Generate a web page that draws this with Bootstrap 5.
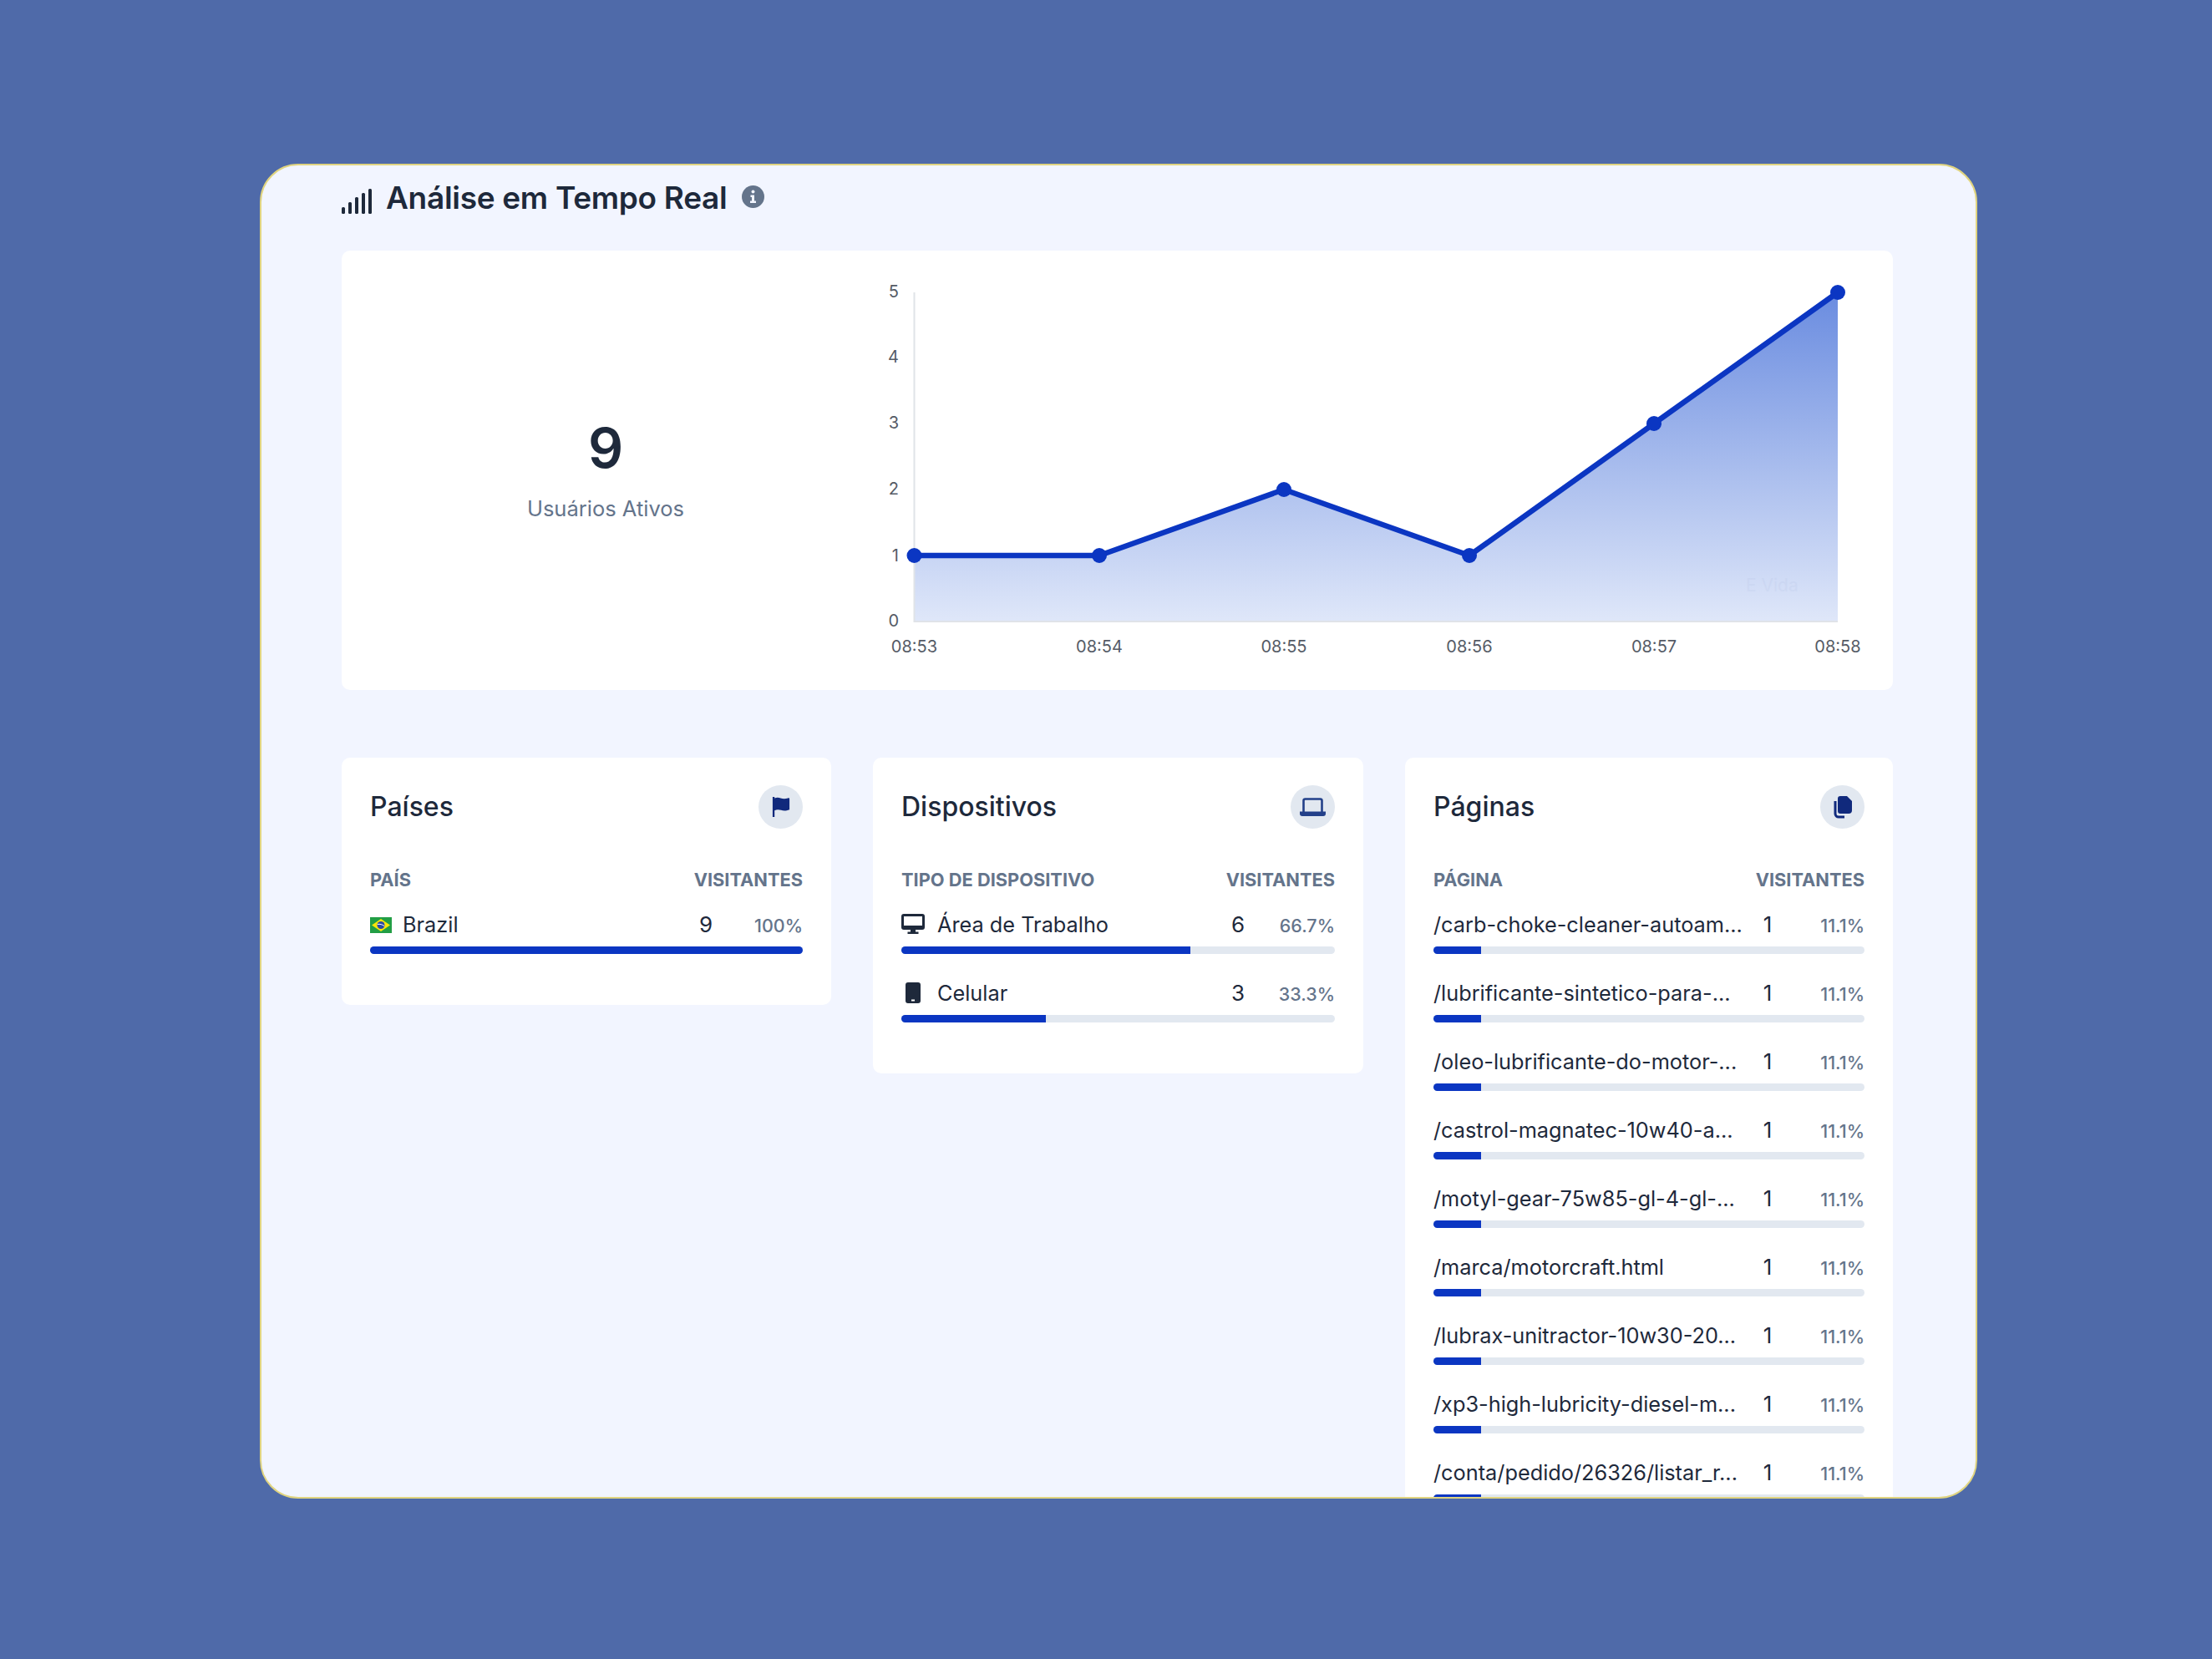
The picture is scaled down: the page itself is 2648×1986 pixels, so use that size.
<!doctype html>
<html lang="pt-BR"><head><meta charset="utf-8"><title>Análise em Tempo Real</title>
<link href="https://cdn.jsdelivr.net/npm/bootstrap@5.3.0/dist/css/bootstrap.min.css" rel="stylesheet">
<style>
html,body{height:1986px;overflow:hidden}
body{background:#4f6aa9;font-family:Inter,"Liberation Sans",sans-serif;color:#1e293b;padding:196px 0 0 311px}
.rt-panel{width:2056px;height:1598px;background:#f2f5ff;border:2px solid #e0d480;border-radius:46px;overflow:hidden;padding:0 99px 0 96px}
.rt-head{height:76px;padding-top:2px}
.rt-head h1{font-size:37px;font-weight:600;margin:0;color:#1e293b;line-height:46px;margin-left:17px;letter-spacing:-.3px}
.rt-head .sig{margin-top:8px}
.rt-head .inf{margin-left:18px;margin-top:-4px}
.rt-card{--bs-card-border-width:0;--bs-card-border-radius:10px;background:#fff}
.rt-top{height:526px;margin-top:26px;margin-bottom:81px;flex-direction:row}
.rt-left{width:632px}
.rt-num{font-size:66px;font-weight:600;line-height:70px;color:#1e293b}
.rt-lab{font-size:25.500px;color:#64748b;line-height:32px;margin-top:22px}
.rt-chart{flex:1}
.rt-chart text{font-family:Inter,"Liberation Sans",sans-serif;font-size:20px;fill:#555b66}
.rt-chart text.rt-wm{fill:#8a9cc8;opacity:.08;font-size:21px}
.rt-grid{grid-template-columns:586px 587px 584px;gap:50px}
.rt-body{padding:33px 34px 34px}
.rt-title{font-size:32px;font-weight:500;margin:0;line-height:52px;color:#1e293b}
.rt-circ{width:53px;height:52px;background:#e2e8f0;border-radius:50%}
.rt-th{font-size:21.800px;font-weight:700;color:#64748b;line-height:28px;margin-top:47px;margin-bottom:24px}
.rt-row{height:82px}
.rt-row:last-child{height:78px}
.rt-line{height:42px;font-size:25.300px;line-height:32px}
.rt-name{min-width:0;white-space:nowrap}
.rt-ico{width:39px;flex:none}
.rt-ico svg{display:block;margin-top:3px}
.rt-ico .rt-flag{margin-top:7px}
.rt-ico-wide{width:43px}
.rt-cnt{width:40px;text-align:center;flex:none;font-size:26px}
.rt-pct{width:96px;text-align:right;flex:none;font-size:21.500px;font-weight:500;color:#64748b;padding-top:1px}
.rt-bar{--bs-progress-height:9px;--bs-progress-bg:#e2e8f0;--bs-progress-bar-bg:#0b36c2;--bs-progress-border-radius:5px}
</style></head>
<body>
<main class="rt-panel">
<div class="rt-head d-flex align-items-center">
<svg class="sig" width="36" height="30" viewBox="0 0 36 30" fill="#1e293b"><rect x="0" y="22" width="4" height="8" rx="1.500"/><rect x="8" y="16" width="4" height="14" rx="1.500"/><rect x="16" y="10" width="4" height="20" rx="1.500"/><rect x="24" y="5" width="4" height="25" rx="1.500"/><rect x="32" y="0" width="4" height="30" rx="1.500"/></svg>
<h1>Análise em Tempo Real</h1>
<svg class="inf" width="27" height="27" viewBox="0 0 27 27"><circle cx="13.500" cy="13.500" r="13.500" fill="#64748b"/><circle cx="13.500" cy="7.500" r="2" fill="#f2f5ff"/><path d="M10.500 11.500h4.500v7h2v2.500h-7v-2.500h2v-4.500h-1.500z" fill="#f2f5ff"/></svg>
</div>
<section class="card rt-card rt-top">
<div class="rt-left d-flex flex-column align-items-center justify-content-center flex-shrink-0">
<div class="rt-num">9</div><div class="rt-lab">Usuários Ativos</div>
</div>
<div class="rt-chart">
<svg width="1225" height="526" viewBox="1041 299 1225 526">
<defs><linearGradient id="rtfill" x1="0" y1="349" x2="0" y2="743" gradientUnits="userSpaceOnUse"><stop offset="0" stop-color="#6a8ce0"/><stop offset="1" stop-color="#dfe7f9"/></linearGradient></defs>
<path d="M1094.500 664L1316 664L1537 585L1759 664L1980 506L2200 349V743H1094.500Z" fill="url(#rtfill)"/>
<path d="M1094.500 349V743H2200" fill="none" stroke="#e0e3e8" stroke-width="2"/>
<text class="rt-wm" x="2090" y="707">E Vida</text>
<path d="M1094.500 664L1316 664L1537 585L1759 664L1980 506L2200 349" fill="none" stroke="#0b36c2" stroke-width="6.500" stroke-linejoin="round"/>
<g fill="#0b36c2"><circle cx="1094.500" cy="664" r="9"/><circle cx="1316" cy="664" r="9"/><circle cx="1537" cy="585" r="9"/><circle cx="1759" cy="664" r="9"/><circle cx="1980" cy="506" r="9"/><circle cx="2200" cy="349" r="9"/></g>
<g text-anchor="end"><text x="1076" y="355">5</text><text x="1076" y="433">4</text><text x="1076" y="512">3</text><text x="1076" y="591">2</text><text x="1076" y="671">1</text><text x="1076" y="749">0</text></g>
<g text-anchor="middle"><text x="1094.500" y="780">08:53</text><text x="1316" y="780">08:54</text><text x="1537" y="780">08:55</text><text x="1759" y="780">08:56</text><text x="1980" y="780">08:57</text><text x="2200" y="780">08:58</text></g>
</svg>
</div>
</section>
<div class="d-grid rt-grid align-items-start">
<section class="card rt-card"><div class="rt-body">
<div class="d-flex justify-content-between align-items-center"><h2 class="rt-title">Países</h2><span class="rt-circ d-flex align-items-center justify-content-center">
<svg width="22" height="24" viewBox="0 0 24 26" fill="#10297c"><path d="M1 0h2.500v1.500c3-1.200 5.500-.8 8 0s5.500 1.200 9.500 0c1.500-.4 2 .2 2 1v14c-4.500 1.800-8 1.500-11 .7s-5.500-1-8.500.3V26H1z"/></svg></span></div>
<div class="rt-th d-flex justify-content-between"><span>PAÍS</span><span>VISITANTES</span></div>
<div class="rt-row"><div class="rt-line d-flex align-items-start"><span class="rt-ico"><svg class="rt-flag" width="26" height="19" viewBox="0 0 26 19"><rect width="26" height="19" fill="#229e45"/><path d="M13 2L24 9.500 13 17 2 9.500z" fill="#f8e509"/><circle cx="13" cy="9.500" r="4.500" fill="#2b49a3"/><path d="M8.800 8.500c3-.6 6 .2 8.200 2" stroke="#fff" stroke-width="1" fill="none"/></svg></span><span class="rt-name flex-grow-1">Brazil</span><span class="rt-cnt">9</span><span class="rt-pct">100%</span></div>
<div class="progress rt-bar"><div class="progress-bar" style="width:100%"></div></div></div>
</div></section>
<section class="card rt-card"><div class="rt-body">
<div class="d-flex justify-content-between align-items-center"><h2 class="rt-title">Dispositivos</h2><span class="rt-circ d-flex align-items-center justify-content-center">
<svg width="31" height="22" viewBox="0 0 31 22" fill="none"><path d="M4.500 17V3.500a2 2 0 0 1 2-2h18a2 2 0 0 1 2 2V17" stroke="#234089" stroke-width="2.600"/><path d="M0 16.500h31v2.500a3 3 0 0 1-3 3H3a3 3 0 0 1-3-3z" fill="#234089"/></svg></span></div>
<div class="rt-th d-flex justify-content-between"><span>TIPO DE DISPOSITIVO</span><span>VISITANTES</span></div>
<div class="rt-row"><div class="rt-line d-flex align-items-start"><span class="rt-ico rt-ico-wide"><svg width="28" height="25" viewBox="0 0 28 25"><path d="M3 0h22a3 3 0 0 1 3 3v13a3 3 0 0 1-3 3H17v2.500h3.500v2.500h-13v-2.500H11V19H3a3 3 0 0 1-3-3V3a3 3 0 0 1 3-3zM3 3v11h22V3z" fill="#1e293b" fill-rule="evenodd"/></svg></span><span class="rt-name flex-grow-1">Área de Trabalho</span><span class="rt-cnt">6</span><span class="rt-pct">66.7%</span></div>
<div class="progress rt-bar"><div class="progress-bar" style="width:66.7%"></div></div></div>
<div class="rt-row"><div class="rt-line d-flex align-items-start"><span class="rt-ico rt-ico-wide"><svg width="28" height="25" viewBox="0 0 28 25"><path d="M8 0h12a3 3 0 0 1 3 3v19a3 3 0 0 1-3 3H8a3 3 0 0 1-3-3V3a3 3 0 0 1 3-3zM12 20.500v2h4v-2z" fill="#1e293b" fill-rule="evenodd"/></svg></span><span class="rt-name flex-grow-1">Celular</span><span class="rt-cnt">3</span><span class="rt-pct">33.3%</span></div>
<div class="progress rt-bar"><div class="progress-bar" style="width:33.3%"></div></div></div>
</div></section>
<section class="card rt-card"><div class="rt-body">
<div class="d-flex justify-content-between align-items-center"><h2 class="rt-title">Páginas</h2><span class="rt-circ d-flex align-items-center justify-content-center">
<svg width="23" height="27" viewBox="0 0 23 27" fill="#10297c"><path d="M9 0h8l6 6v11a4 4 0 0 1-4 4H9a3 3 0 0 1-3-3V3a3 3 0 0 1 3-3z"/><path d="M3 6v15a4 4 0 0 0 4 4h7" fill="none" stroke="#10297c" stroke-width="3"/></svg></span></div>
<div class="rt-th d-flex justify-content-between"><span>PÁGINA</span><span>VISITANTES</span></div>
<div class="rt-row"><div class="rt-line d-flex align-items-start"><span class="rt-name flex-grow-1">/carb-choke-cleaner-autoam...</span><span class="rt-cnt">1</span><span class="rt-pct">11.1%</span></div><div class="progress rt-bar"><div class="progress-bar" style="width:11.1%"></div></div></div>
<div class="rt-row"><div class="rt-line d-flex align-items-start"><span class="rt-name flex-grow-1">/lubrificante-sintetico-para-...</span><span class="rt-cnt">1</span><span class="rt-pct">11.1%</span></div><div class="progress rt-bar"><div class="progress-bar" style="width:11.1%"></div></div></div>
<div class="rt-row"><div class="rt-line d-flex align-items-start"><span class="rt-name flex-grow-1">/oleo-lubrificante-do-motor-...</span><span class="rt-cnt">1</span><span class="rt-pct">11.1%</span></div><div class="progress rt-bar"><div class="progress-bar" style="width:11.1%"></div></div></div>
<div class="rt-row"><div class="rt-line d-flex align-items-start"><span class="rt-name flex-grow-1">/castrol-magnatec-10w40-a...</span><span class="rt-cnt">1</span><span class="rt-pct">11.1%</span></div><div class="progress rt-bar"><div class="progress-bar" style="width:11.1%"></div></div></div>
<div class="rt-row"><div class="rt-line d-flex align-items-start"><span class="rt-name flex-grow-1">/motyl-gear-75w85-gl-4-gl-...</span><span class="rt-cnt">1</span><span class="rt-pct">11.1%</span></div><div class="progress rt-bar"><div class="progress-bar" style="width:11.1%"></div></div></div>
<div class="rt-row"><div class="rt-line d-flex align-items-start"><span class="rt-name flex-grow-1">/marca/motorcraft.html</span><span class="rt-cnt">1</span><span class="rt-pct">11.1%</span></div><div class="progress rt-bar"><div class="progress-bar" style="width:11.1%"></div></div></div>
<div class="rt-row"><div class="rt-line d-flex align-items-start"><span class="rt-name flex-grow-1">/lubrax-unitractor-10w30-20...</span><span class="rt-cnt">1</span><span class="rt-pct">11.1%</span></div><div class="progress rt-bar"><div class="progress-bar" style="width:11.1%"></div></div></div>
<div class="rt-row"><div class="rt-line d-flex align-items-start"><span class="rt-name flex-grow-1">/xp3-high-lubricity-diesel-m...</span><span class="rt-cnt">1</span><span class="rt-pct">11.1%</span></div><div class="progress rt-bar"><div class="progress-bar" style="width:11.1%"></div></div></div>
<div class="rt-row"><div class="rt-line d-flex align-items-start"><span class="rt-name flex-grow-1">/conta/pedido/26326/listar_r...</span><span class="rt-cnt">1</span><span class="rt-pct">11.1%</span></div><div class="progress rt-bar"><div class="progress-bar" style="width:11.1%"></div></div></div>
</div></section>
</div>
</main>
<script src="https://cdn.jsdelivr.net/npm/bootstrap@5.3.0/dist/js/bootstrap.bundle.min.js"></script>
</body></html>
